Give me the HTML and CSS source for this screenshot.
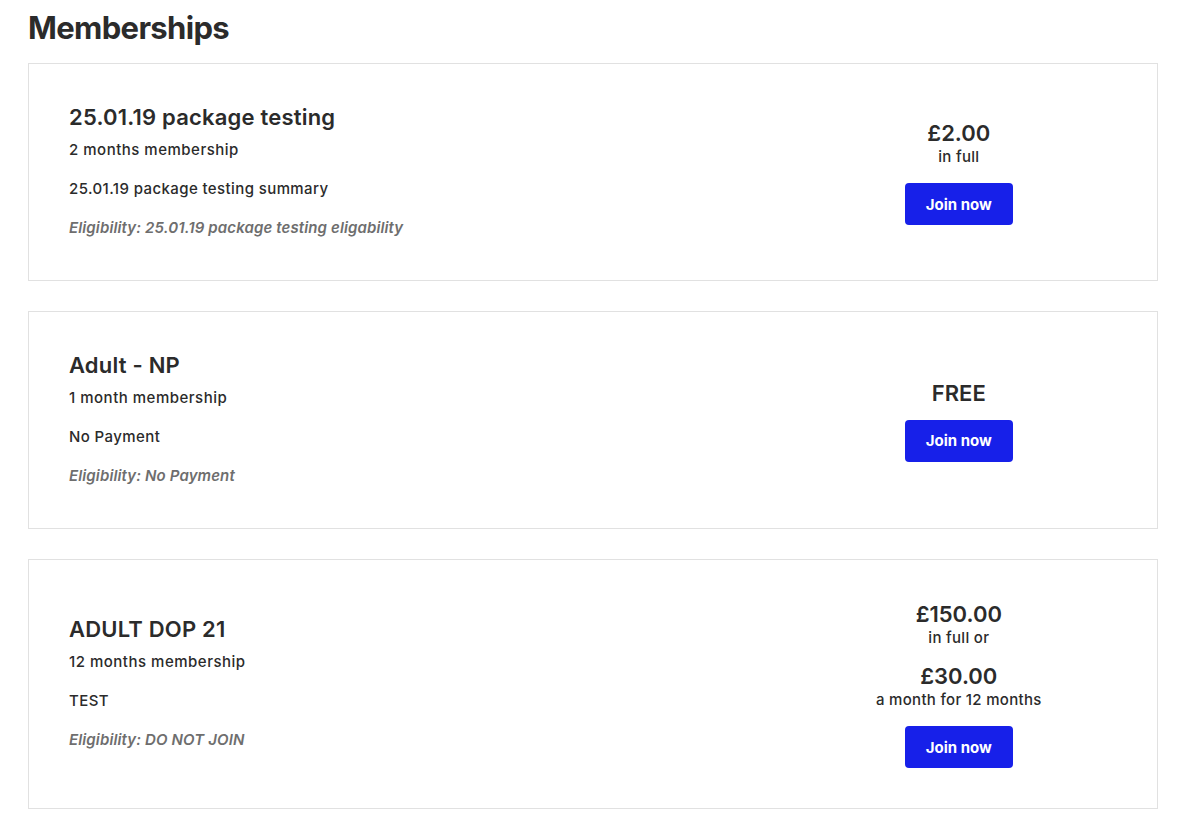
FILE: index.html
```html
<html>

<head>
  <link rel="stylesheet" href="styles.css">
</head>

<body>
  <div class="page">
    <h1 class="page-title">Memberships</h1>

    <div class="card">
      <div class="info">
        <h2>25.01.19 package testing</h2>
        <p class="length">2 months membership</p>
        <p class="summary">25.01.19 package testing summary</p>
        <p class="eligibility">Eligibility: 25.01.19 package testing eligability</p>
      </div>
      <div class="pricing">
        <div class="price">
          <div class="amount">£2.00</div>
          <div class="note">in full</div>
        </div>
        <button class="join">Join now</button>
      </div>
    </div>

    <div class="card">
      <div class="info">
        <h2>Adult - NP</h2>
        <p class="length">1 month membership</p>
        <p class="summary">No Payment</p>
        <p class="eligibility">Eligibility: No Payment</p>
      </div>
      <div class="pricing">
        <div class="price free">
          <div class="amount">FREE</div>
        </div>
        <button class="join">Join now</button>
      </div>
    </div>

    <div class="card">
      <div class="info">
        <h2>ADULT DOP 21</h2>
        <p class="length">12 months membership</p>
        <p class="summary">TEST</p>
        <p class="eligibility">Eligibility: DO NOT JOIN</p>
      </div>
      <div class="pricing">
        <div class="price">
          <div class="amount">£150.00</div>
          <div class="note">in full or</div>
        </div>
        <div class="price">
          <div class="amount">£30.00</div>
          <div class="note">a month for 12 months</div>
        </div>
        <button class="join">Join now</button>
      </div>
    </div>
  </div>
</body>

</html>
```

FILE: styles.css
```css
body {
  margin: 0;
  padding: 0;
  background-color: #ffffff;
  color: #2b2b2b;
  font-family: Inter, "Noto Sans", sans-serif;
}

.page {
  width: 1130px;
  padding: 8px 28px 20px 28px;
}

.page-title {
  margin: 0 0 15px 0;
  font-size: 31px;
  line-height: 40px;
  font-weight: 700;
  letter-spacing: -0.65px;
}

.card {
  display: flex;
  align-items: center;
  border: 1px solid #e1e1e1;
  padding: 40px;
  margin-bottom: 30px;
}

.info {
  width: 70%;
  margin: -1px 0 1px 0;
}

.info h2 {
  margin: 0 0 8px 0;
  font-size: 22px;
  line-height: 28px;
  font-weight: 600;
  letter-spacing: 0.2px;
}

.info p {
  margin: 0;
  font-size: 15px;
  line-height: 22px;
  font-weight: 500;
  letter-spacing: 0.4px;
}

.info .length {
  letter-spacing: 0.5px;
}

.info .summary,
.info .eligibility {
  margin-top: 17px;
}

.info .eligibility {
  color: #6e6e6e;
  font-style: italic;
  font-weight: 600;
  letter-spacing: 0.12px;
}

.pricing {
  width: 30%;
  display: flex;
  flex-direction: column;
  align-items: center;
  text-align: center;
  margin-left: -1px;
}

.price {
  margin-bottom: 14px;
}

.price + .join {
  margin-top: 2px;
}

.price.free {
  margin-bottom: 13px;
}

.price.free + .join {
  margin-top: 0;
}

.amount {
  font-size: 22px;
  line-height: 28px;
  font-weight: 600;
}

.note {
  font-size: 15px;
  line-height: 20px;
  font-weight: 500;
  letter-spacing: 0.3px;
}

.join {
  width: 108px;
  height: 42px;
  border: none;
  border-radius: 4px;
  background-color: #1720e9;
  color: #ffffff;
  font-family: Inter, "Noto Sans", sans-serif;
  font-size: 15px;
  font-weight: 700;
  cursor: pointer;
}
```
